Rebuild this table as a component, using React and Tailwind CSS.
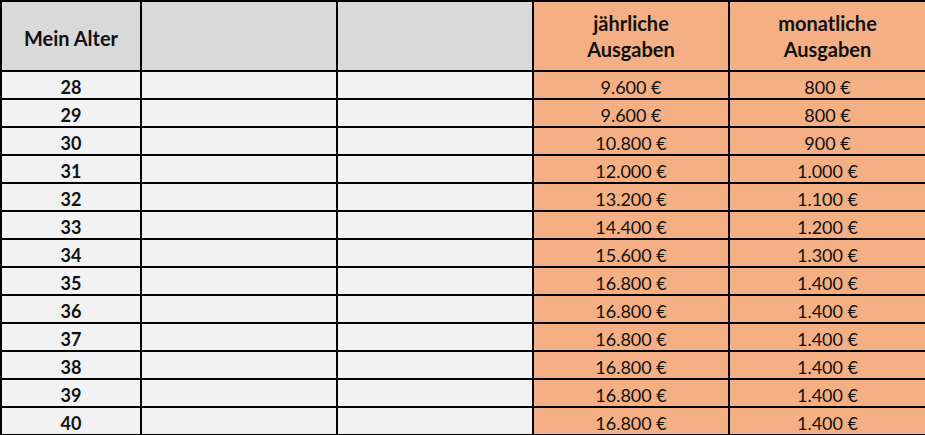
const ROWS = [
  [28, '9.600 €', '800 €'],
  [29, '9.600 €', '800 €'],
  [30, '10.800 €', '900 €'],
  [31, '12.000 €', '1.000 €'],
  [32, '13.200 €', '1.100 €'],
  [33, '14.400 €', '1.200 €'],
  [34, '15.600 €', '1.300 €'],
  [35, '16.800 €', '1.400 €'],
  [36, '16.800 €', '1.400 €'],
  [37, '16.800 €', '1.400 €'],
  [38, '16.800 €', '1.400 €'],
  [39, '16.800 €', '1.400 €'],
  [40, '16.800 €', '1.400 €'],
]

export default function App() {
  return (
    <div className="w-[925px] h-[435px] bg-white overflow-hidden" style={{ fontFamily: 'Lato, "Open Sans", sans-serif' }}>
      <table className="border-collapse table-fixed text-[18px] text-[#111] w-[925px]">
        <colgroup>
          <col className="w-[140px]" />
          <col className="w-[196px]" />
          <col className="w-[196px]" />
          <col className="w-[196px]" />
          <col className="w-[197px]" />
        </colgroup>
        <thead>
          <tr className="h-[70px]">
            <th className="border-2 border-black bg-[#d9d9d9] font-bold text-[20px] text-center pt-[3px]">Mein Alter</th>
            <th className="border-2 border-black bg-[#d9d9d9]"></th>
            <th className="border-2 border-black bg-[#d9d9d9]"></th>
            <th className="border-2 border-black bg-[#f4b084] font-bold text-[20px] text-center leading-[26px]">jährliche<br />Ausgaben</th>
            <th className="border-2 border-black bg-[#f4b084] font-bold text-[20px] text-center leading-[26px]">monatliche<br />Ausgaben</th>
          </tr>
        </thead>
        <tbody>
          {ROWS.map(([age, year, month]) => (
            <tr key={age} className="h-[28px]">
              <td className="border-2 border-black bg-[#f2f2f2] font-bold text-center leading-none pt-[3px]">{age}</td>
              <td className="border-2 border-black bg-[#f2f2f2]"></td>
              <td className="border-2 border-black bg-[#f2f2f2]"></td>
              <td className="border-2 border-black bg-[#f4b084] text-center leading-none pt-[3px]">{year}</td>
              <td className="border-2 border-black bg-[#f4b084] text-center leading-none pt-[3px]">{month}</td>
            </tr>
          ))}
        </tbody>
      </table>
    </div>
  )
}
